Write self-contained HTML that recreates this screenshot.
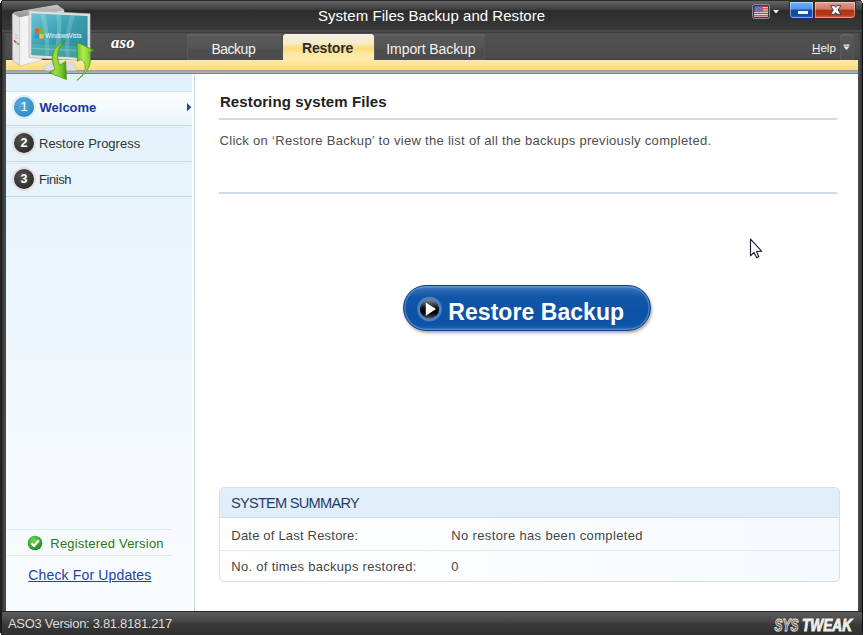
<!DOCTYPE html>
<html><head><meta charset="utf-8">
<style>
*{margin:0;padding:0;box-sizing:border-box}
html,body{width:864px;height:635px;overflow:hidden;background:#fff;font-family:"Liberation Sans",sans-serif}
.a{position:absolute}
.t{position:absolute;white-space:nowrap;line-height:1}
#win{position:absolute;left:0;top:0;width:863px;height:635px;background:#2e2e2e}
#lb{left:0;top:33px;width:6px;height:578px;background:linear-gradient(90deg,#262626 0,#262626 1px,#1a1a1a 1px,#1a1a1a 2px,#333 2px,#3a3a3a 3px,#444 4px,#4a4a4a 5px,#4a4a4a 6px)}
#lb2{left:0;top:0;width:2px;height:33px;background:#1e1e1e}
#lb3{left:0;top:611px;width:2px;height:24px;background:#1a1a1a}
#rb{left:858px;top:33px;width:5px;height:578px;background:linear-gradient(90deg,#4a4a4a 0,#4a4a4a 2px,#3a3a3a 2px,#3a3a3a 4px,#111 4px,#111 5px)}
#rb2{left:862px;top:0;width:1px;height:633px;background:#111}
#title{left:0;top:0;width:862px;height:33px;background:linear-gradient(#2c2c2c 0,#2c2c2c 1px,#626262 1.5px,#565656 4px,#494949 7px,#3d3d3d 9.5px,#2c2c2c 10.5px,#323232 20px,#383838 29.5px,#4a4a4a 30.5px,#4a4a4a 32px,#3e3e3e 32.3px,#3e3e3e 33px)}
#tabs{left:6px;top:33px;width:852px;height:27px;background:linear-gradient(#515151,#4c4c4c 92%,#3e3e3e)}
#ystrip{left:6px;top:60px;width:852px;height:10px;background:linear-gradient(#fdeaa9,#f9dc7f)}
#gstrip{left:6px;top:70px;width:852px;height:3px;background:linear-gradient(#9a9a9a,#b3b3b3)}
#bstrip{left:6px;top:73px;width:852px;height:1px;background:#5b88b5}
#content{left:6px;top:74px;width:852px;height:537px;background:#fff}
#side{left:6px;top:74px;width:186px;height:537px;background:linear-gradient(#e1f1fa,#ebf5fc 40%,#f3f9fd 70%,#f9fcfe)}
#vline{left:194px;top:74px;width:1px;height:537px;background:#c3d6e2}
#status{left:0;top:611px;width:862px;height:24px;background:linear-gradient(#2a2a2a 0,#2a2a2a 1px,#5c5c5c 1px,#4c4c4c 8px,#383838 14px,#303030)}
.tab{position:absolute;top:34px;height:26px;border-radius:3px 3px 0 0;background:linear-gradient(#5a5a5a 0,#555 14px,#4e4e4e 15px,#4c4c4c 100%);box-shadow:inset 0 1.5px 0 #676767,inset 1px 0 0 #595959,inset -1px 0 0 #555}
.tab.sel{background:linear-gradient(#f3f0e6 0,#f6ecc8 35%,#fbdc78 55%,#fde7a4 75%,#fdeaa8 100%);box-shadow:none}
.row{position:absolute;left:6px;width:186px}
.sep{position:absolute;height:1px}
.num{position:absolute;width:20px;height:20px;border-radius:50%;color:#fff;font-size:12.5px;font-weight:bold;line-height:20px;text-align:center}
.lbl{font-size:13px;color:#333}
</style></head><body>
<div id="win">
<div class="a" id="title"></div>
<div class="a" id="tabs"></div>
<div class="a" id="ystrip"></div>
<div class="a" id="gstrip"></div>
<div class="a" id="bstrip"></div>
<div class="a" id="content"></div>
<div class="a" id="side"></div>
<div class="a" id="vline"></div>
<div class="a" id="status"></div>
<div class="a" id="lb"></div><div class="a" id="lb2"></div><div class="a" id="lb3"></div>
<div class="a" id="rb"></div><div class="a" id="rb2"></div>

<div class="a" style="left:0;top:0;width:2px;height:1px;background:#fff"></div>
<div class="a" style="left:0;top:1px;width:1px;height:2px;background:#fff"></div>
<div class="a" style="left:861px;top:0;width:2px;height:1px;background:#fff"></div>
<div class="a" style="left:862px;top:1px;width:1px;height:2px;background:#fff"></div>
<div class="a" style="left:0;top:633px;width:1px;height:2px;background:#fff"></div>
<!-- title -->
<div class="t" style="left:318px;top:8px;font-size:15px;color:#fff;letter-spacing:0.04px">System Files Backup and Restore</div>

<!-- tabs -->
<div class="tab" style="left:187px;width:95px"></div>
<div class="tab sel" style="left:283px;width:91px"></div>
<div class="tab" style="left:374px;width:111px"></div>
<div class="tab" style="left:840px;width:14px;border-radius:4px 4px 0 0;background:linear-gradient(#585858,#4d4d4d)"></div>
<div class="t" style="left:211.5px;top:41.5px;font-size:14px;color:#f2f2f2;letter-spacing:-0.5px">Backup</div>
<div class="t" style="left:302px;top:40.6px;font-size:14px;font-weight:bold;color:#2b2b36;letter-spacing:-0.15px">Restore</div>
<div class="t" style="left:386.3px;top:41.5px;font-size:14px;color:#f2f2f2;letter-spacing:-0.08px">Import Backup</div>
<div class="t" style="left:812px;top:41.5px;font-size:11.6px;color:#f2f2f2"><span style="text-decoration:underline">H</span>elp</div>
<svg class="a" style="left:843px;top:44px" width="7" height="7" viewBox="0 0 7 7"><rect x="0.5" y="0.5" width="6" height="1.3" fill="#f0f0f0"/><path d="M0.5 2.6 H6.5 L3.5 6 Z" fill="#f0f0f0"/></svg>
<div class="t" style="left:111px;top:34.8px;font-family:'Liberation Serif',serif;font-style:italic;font-weight:bold;font-size:16.3px;color:#fff;letter-spacing:0.35px;text-shadow:0 0 2px #222,0.3px 0 0 #fff">aso</div>

<!-- caption buttons -->
<div class="a" style="left:752px;top:4px;width:18px;height:15px;border:1.2px solid #8c8c8c;border-radius:2.5px;background:#3a3a3a"></div>
<svg class="a" style="left:753.7px;top:5.7px" width="14.5" height="11.5" viewBox="0 0 14.5 11.5">
<rect width="14.5" height="11.5" fill="#f4f4f4"/><rect y="0.000" width="14.5" height="0.885" fill="#d8101c"/><rect y="1.769" width="14.5" height="0.885" fill="#d8101c"/><rect y="3.538" width="14.5" height="0.885" fill="#d8101c"/><rect y="5.308" width="14.5" height="0.885" fill="#d8101c"/><rect y="7.077" width="14.5" height="0.885" fill="#d8101c"/><rect y="8.846" width="14.5" height="0.885" fill="#d8101c"/><rect y="10.615" width="14.5" height="0.885" fill="#d8101c"/>
<rect width="8.3" height="6.192" fill="#25308e"/>
<g fill="#fff" opacity="0.85"><circle cx="0.90" cy="0.75" r="0.38"/><circle cx="2.25" cy="0.75" r="0.38"/><circle cx="3.60" cy="0.75" r="0.38"/><circle cx="4.95" cy="0.75" r="0.38"/><circle cx="6.30" cy="0.75" r="0.38"/><circle cx="7.65" cy="0.75" r="0.38"/><circle cx="1.57" cy="1.50" r="0.38"/><circle cx="2.92" cy="1.50" r="0.38"/><circle cx="4.27" cy="1.50" r="0.38"/><circle cx="5.62" cy="1.50" r="0.38"/><circle cx="6.97" cy="1.50" r="0.38"/><circle cx="0.90" cy="2.25" r="0.38"/><circle cx="2.25" cy="2.25" r="0.38"/><circle cx="3.60" cy="2.25" r="0.38"/><circle cx="4.95" cy="2.25" r="0.38"/><circle cx="6.30" cy="2.25" r="0.38"/><circle cx="7.65" cy="2.25" r="0.38"/><circle cx="1.57" cy="3.00" r="0.38"/><circle cx="2.92" cy="3.00" r="0.38"/><circle cx="4.27" cy="3.00" r="0.38"/><circle cx="5.62" cy="3.00" r="0.38"/><circle cx="6.97" cy="3.00" r="0.38"/><circle cx="0.90" cy="3.75" r="0.38"/><circle cx="2.25" cy="3.75" r="0.38"/><circle cx="3.60" cy="3.75" r="0.38"/><circle cx="4.95" cy="3.75" r="0.38"/><circle cx="6.30" cy="3.75" r="0.38"/><circle cx="7.65" cy="3.75" r="0.38"/><circle cx="1.57" cy="4.50" r="0.38"/><circle cx="2.92" cy="4.50" r="0.38"/><circle cx="4.27" cy="4.50" r="0.38"/><circle cx="5.62" cy="4.50" r="0.38"/><circle cx="6.97" cy="4.50" r="0.38"/><circle cx="0.90" cy="5.25" r="0.38"/><circle cx="2.25" cy="5.25" r="0.38"/><circle cx="3.60" cy="5.25" r="0.38"/><circle cx="4.95" cy="5.25" r="0.38"/><circle cx="6.30" cy="5.25" r="0.38"/><circle cx="7.65" cy="5.25" r="0.38"/><circle cx="1.57" cy="6.00" r="0.38"/><circle cx="2.92" cy="6.00" r="0.38"/><circle cx="4.27" cy="6.00" r="0.38"/><circle cx="5.62" cy="6.00" r="0.38"/><circle cx="6.97" cy="6.00" r="0.38"/><circle cx="0.90" cy="6.75" r="0.38"/><circle cx="2.25" cy="6.75" r="0.38"/><circle cx="3.60" cy="6.75" r="0.38"/><circle cx="4.95" cy="6.75" r="0.38"/><circle cx="6.30" cy="6.75" r="0.38"/><circle cx="7.65" cy="6.75" r="0.38"/></g>
</svg>
<svg class="a" style="left:773px;top:10px" width="6" height="4" viewBox="0 0 6 4"><path d="M0 0 H6 L3 3.5 Z" fill="#eee"/></svg>

<div class="a" style="left:789px;top:1px;width:25px;height:18px;border:1px solid #0b2f7a;border-radius:0 0 0 4px;background:linear-gradient(#76b2f4 0,#4f92e4 45%,#0c4aa6 50%,#0d4aa8 80%,#2a66c0 100%);box-shadow:inset 0 0 0 1px rgba(255,255,255,0.45)"></div>
<div class="a" style="left:798px;top:11px;width:10px;height:3px;background:#f4f8ff;box-shadow:0 0 1px #0a3a90"></div>
<div class="a" style="left:814px;top:1px;width:42px;height:18px;border:1px solid #5a1a0c;border-radius:0 0 4px 0;background:linear-gradient(#dca090 0,#cf7c68 45%,#b8300e 50%,#b23a18 80%,#c86a50 100%);box-shadow:inset 0 0 0 1px rgba(255,255,255,0.4)"></div>
<svg class="a" style="left:824px;top:2px" width="24" height="16" viewBox="824 2 24 16"><path d="M830.5 5.6 H834.5 L835.7 7.3 L836.9 5.6 H840.9 L838.2 10 L840.9 14.3 H836.9 L835.7 12.6 L834.5 14.3 H830.5 L833.2 10 Z" fill="#f6f6f6" stroke="#2a3242" stroke-width="0.9" stroke-linejoin="round"/></svg>

<!-- logo -->
<svg class="a" style="left:0;top:0" width="100" height="85" viewBox="0 0 100 85">
<defs>
<linearGradient id="scr" x1="0" y1="0" x2="1" y2="1"><stop offset="0" stop-color="#6cc6d6"/><stop offset="0.45" stop-color="#3a9fb2"/><stop offset="1" stop-color="#2c8590"/></linearGradient>
<linearGradient id="gr1" x1="0" y1="0" x2="1" y2="0"><stop offset="0" stop-color="#4fa818"/><stop offset="0.35" stop-color="#9edc3c"/><stop offset="0.7" stop-color="#7cc82a"/><stop offset="1" stop-color="#3f9412"/></linearGradient>
<linearGradient id="gr2" x1="0" y1="0" x2="1" y2="0"><stop offset="0" stop-color="#6cc21e"/><stop offset="0.35" stop-color="#b4ea50"/><stop offset="0.75" stop-color="#86cc2c"/><stop offset="1" stop-color="#3f9412"/></linearGradient>
<linearGradient id="top" x1="0" y1="0" x2="0" y2="1"><stop offset="0" stop-color="#c8c8c8"/><stop offset="1" stop-color="#8e8e8e"/></linearGradient>
</defs>
<path d="M12.3 15 Q12.5 12.8 15 12.3 L57 5 L64 10 L64 20 L41.5 59.7 L20 65.6 L12.6 61 Z" fill="#e2e2e2" stroke="#b4b4b4" stroke-width="0.6"/>
<path d="M12.8 13.5 Q13.5 12.3 15.5 12 L57 5.3 L64 10.5 L28 15.5 L19.5 17.5 Z" fill="url(#top)"/>
<path d="M19.5 17.5 L28.8 15.5 L28.8 57.5 L41.5 59.7 L20 65.6 Z" fill="#f2f2f2"/>
<path d="M19.6 17.5 V65.4" stroke="#c4c4c4" stroke-width="0.8"/>
<path d="M15 34 L17.5 35.5 M15 37 L17.5 38.5" stroke="#aaa" stroke-width="0.6"/>
<path d="M14 40.5 L16.3 42.3" stroke="#e04040" stroke-width="1.6"/><path d="M16.8 42.8 L19.3 44.6" stroke="#40c040" stroke-width="1.6"/>
<path d="M42.5 66.5 L52 62 L74 62.5 L76 70.5 L46 70.5 Z" fill="#dedede" stroke="#c2c2c2" stroke-width="0.5"/>
<path d="M29 10.8 L90 13.8 L90 61 L29 57.5 Z" fill="#e2e2e2" stroke="#bdbdbd" stroke-width="0.7"/>
<path d="M31.3 13.3 L87.6 16 L87.6 58.3 L31.3 55 Z" fill="url(#scr)"/>
<path d="M40 13.7 C44 28 46 40 45 55.5 L49 55.8 C50 40 48 28 45 14 Z" fill="#bff0f0" opacity="0.25"/>
<path d="M56 14.5 C58 28 57 42 54 56.3 L58 56.6 C61 42 62 28 61 14.8 Z" fill="#c8f4f0" opacity="0.22"/>
<path d="M70 15.2 C66 30 64 44 66 57.3 L70 57.5 C68 44 70 30 75 15.4 Z" fill="#d0f6e8" opacity="0.2"/>
<path d="M31.3 44 L87.6 47 L87.6 58.3 L31.3 55 Z" fill="#6ac0b0" opacity="0.35"/>
<path d="M31.3 47.5 L87.6 50.5 L87.6 52 L31.3 49 Z" fill="#b0ecdc" opacity="0.3"/>
<g transform="translate(35,28.5)"><rect x="0" y="0" width="4.2" height="4.6" fill="#f25a1e"/><rect x="4.7" y="0.4" width="4.2" height="4.6" fill="#7ab92a"/><rect x="-0.3" y="5.1" width="4.2" height="4.6" fill="#1e9bea"/><rect x="4.4" y="5.5" width="4.2" height="4.6" fill="#f7c21a"/></g>
<text x="45.5" y="37.6" font-family="Liberation Sans" font-size="7.4" fill="#fff" textLength="36" lengthAdjust="spacingAndGlyphs">WindowsVista</text>
<path d="M66 40.5 C58 44 52.3 50 52.3 58 C52.5 63 53.5 66 55 68.8 L48.8 72.8 L66.5 79.6 L65.6 61.2 L60 65.3 C57.5 61 57 55 58.5 50 C60 46 63 42.5 66 40.5 Z" fill="url(#gr1)" stroke="#3b8a0e" stroke-width="0.6" stroke-linejoin="round"/>
<path d="M77 80.3 C83 76 88 71 90 64 C91 59 90.3 55 88.8 52.5 L94.5 50.6 L77 42.3 L77.3 61.4 L80.6 59.2 C83.5 60 85.2 63 85.2 67 C85.2 72 82 76 77 80.3 Z" fill="url(#gr2)" stroke="#3b8a0e" stroke-width="0.6" stroke-linejoin="round"/>
</svg>

<!-- sidebar -->
<div class="sep" style="left:6px;top:91px;width:186px;background:#d3e1ea"></div>
<div class="row" style="top:92px;height:33px;background:linear-gradient(#fbfdfe,#f2f8fc 60%,#e9f4fa)"></div>
<div class="sep" style="left:6px;top:125px;width:186px;background:#cad8e2"></div>
<div class="sep" style="left:6px;top:127px;width:178px;background:#dce9f1"></div>
<div class="sep" style="left:6px;top:161px;width:186px;background:#cad8e2"></div>
<div class="sep" style="left:6px;top:163px;width:178px;background:#dce9f1"></div>
<div class="sep" style="left:6px;top:196px;width:186px;background:#cad8e2"></div>

<div class="num" style="left:12px;top:95px;width:24px;height:24px;background:#d6ecf8"></div>
<div class="num" style="left:14px;top:97px;background:radial-gradient(circle at 40% 35%,#58b0e0,#348cbf 70%,#2d80b4);font-weight:normal;font-size:13px">1</div>
<div class="num" style="left:12px;top:130.7px;width:24px;height:24px;background:#e8dcdc"></div>
<div class="num" style="left:14px;top:132.7px;background:radial-gradient(circle at 40% 35%,#555,#2e2e2e 70%,#262626)">2</div>
<div class="num" style="left:12px;top:166.6px;width:24px;height:24px;background:#e8dcdc"></div>
<div class="num" style="left:14px;top:168.6px;background:radial-gradient(circle at 40% 35%,#555,#2e2e2e 70%,#262626)">3</div>

<div class="t" style="left:39.5px;top:100.8px;font-size:13px;font-weight:bold;color:#1b3799">Welcome</div>
<svg class="a" style="left:187px;top:103px" width="5" height="9" viewBox="0 0 5 9"><path d="M0 0 L4.3 4.15 L0 8.3 Z" fill="#2a4585"/></svg>
<div class="t lbl" style="left:39px;top:136.7px">Restore Progress</div>
<div class="t lbl" style="left:39px;top:172.6px;letter-spacing:-0.45px">Finish</div>

<div class="sep" style="left:7px;top:529px;width:165px;background:#dbe9f4"></div>
<div class="sep" style="left:7px;top:555px;width:165px;background:#dbe9f4"></div>
<svg class="a" style="left:27px;top:535px" width="16" height="16" viewBox="0 0 16 16"><defs><radialGradient id="gc" cx="0.4" cy="0.3" r="0.7"><stop offset="0" stop-color="#6fd65a"/><stop offset="1" stop-color="#1e8a1e"/></radialGradient></defs><circle cx="8" cy="8" r="7.3" fill="url(#gc)"/><path d="M4.3 8.2 L7 10.8 L11.8 5.2" stroke="#fff" stroke-width="2.2" fill="none"/></svg>
<div class="t" style="left:50.3px;top:536.7px;font-size:13px;color:#2e7414;letter-spacing:0.2px">Registered Version</div>
<div class="t" style="left:28.3px;top:568.3px;font-size:14px;color:#2440a8;text-decoration:underline;letter-spacing:0.15px">Check For Updates</div>

<!-- content -->
<div class="t" style="left:219.9px;top:94.2px;font-size:15px;font-weight:bold;color:#222;letter-spacing:0.12px">Restoring system Files</div>
<div class="a" style="left:219px;top:118px;width:618px;height:1.5px;background:#cfdbe8"></div>
<div class="t" style="left:219.5px;top:134.2px;font-size:13px;color:#4d4d4d;letter-spacing:0.3px">Click on ‘Restore Backup’ to view the list of all the backups previously completed.</div>
<div class="a" style="left:219px;top:192px;width:618px;height:1.5px;background:#cfdbe8"></div>

<!-- cursor -->
<svg class="a" style="left:749px;top:238px" width="15" height="22" viewBox="0 0 15 22"><path d="M1.5 1.2 L1.5 17.8 L5 14.4 L7.6 19.6 L9.8 18.7 L7.5 13.5 L12.6 13.1 Z" fill="#fff" stroke="#1a1a2a" stroke-width="1.15" stroke-linejoin="round"/></svg>

<!-- button -->
<div class="a" style="left:403px;top:285px;width:248px;height:46px;border-radius:23px;background:linear-gradient(#4f86c8 0,#2c68b6 10%,#1157a8 24%,#0d52a5 60%,#0d53a6 88%,#2466b8 100%);border:1px solid #0d3f88;box-shadow:1px 2px 3px rgba(50,35,20,0.38),inset 0 0 0 1.5px rgba(110,160,220,0.6)"></div>
<svg class="a" style="left:416px;top:296px" width="27" height="27" viewBox="0 0 27 27"><defs><linearGradient id="pb" x1="0" y1="0" x2="0" y2="1"><stop offset="0" stop-color="#8a8a8a"/><stop offset="0.45" stop-color="#111"/><stop offset="0.7" stop-color="#000"/><stop offset="1" stop-color="#555"/></linearGradient></defs><circle cx="13.5" cy="13" r="12.3" fill="#4a82c8"/><circle cx="13.5" cy="13" r="9.6" fill="url(#pb)"/><path d="M9.8 6.5 L20 13 L9.8 19.8 Z" fill="#fff"/></svg>
<div class="t" style="left:448.3px;top:301.2px;font-size:23px;font-weight:bold;color:#fff;letter-spacing:0.05px">Restore Backup</div>

<!-- summary -->
<div class="a" style="left:219px;top:487px;width:621px;height:95px;border:1px solid #d9dee3;border-radius:5px;background:linear-gradient(90deg,#fff,#f4fafd);overflow:hidden">
  <div class="a" style="left:0;top:0;width:619px;height:30px;background:#dfeef8;border-bottom:1px solid #d4dde4"></div>
  <div class="a" style="left:0;top:62px;width:619px;height:1px;background:#e3e8ec"></div>
</div>
<div class="t" style="left:231px;top:495.7px;font-size:14.6px;color:#1f3a6c;letter-spacing:-0.75px">SYSTEM SUMMARY</div>
<div class="t" style="left:231.3px;top:529.3px;font-size:13px;color:#454545;letter-spacing:0.2px">Date of Last Restore:</div>
<div class="t" style="left:451.3px;top:529.3px;font-size:13px;color:#454545;letter-spacing:0.35px">No restore has been completed</div>
<div class="t" style="left:231.3px;top:560.4px;font-size:13px;color:#454545;letter-spacing:0.3px">No. of times backups restored:</div>
<div class="t" style="left:451.3px;top:560.4px;font-size:13px;color:#454545">0</div>

<!-- status -->
<div class="t" style="left:8px;top:616.6px;font-size:13px;color:#dcdcdc;letter-spacing:-0.3px">ASO3 Version: 3.81.8181.217</div>
<svg class="a" style="left:770px;top:614px" width="88" height="20" viewBox="0 0 88 20">
<text x="4.5" y="16.8" font-family="Liberation Sans" font-style="italic" font-weight="bold" font-size="16.5" fill="none" stroke="#e8e8e0" stroke-width="1" textLength="24" lengthAdjust="spacingAndGlyphs">SYS</text>
<text x="32" y="16.8" font-family="Liberation Sans" font-style="italic" font-weight="bold" font-size="16.5" fill="#efefe6" stroke="#efefe6" stroke-width="0.9" textLength="50" lengthAdjust="spacingAndGlyphs">TWEAK</text>
</svg>
</div>
</body></html>
